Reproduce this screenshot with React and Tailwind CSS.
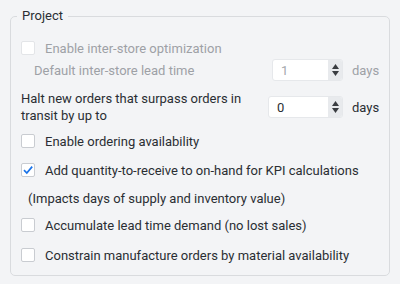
import React from "react";

function Box({ checked, disabled }) {
  return (
    <span
      className={
        "flex h-[14px] w-[14px] shrink-0 items-center justify-center rounded-[2px] border bg-white " +
        (disabled ? "border-[#e3e5e8]" : "border-[#c9ccd1]")
      }
    >
      {checked && (
        <svg width="12" height="12" viewBox="0 0 12 12">
          <path d="M2 6.2 L4.8 9 L10.2 2.6" fill="none" stroke="#1a73e8" strokeWidth="1.7" />
        </svg>
      )}
    </span>
  );
}

function CheckRow({ label, checked, disabled, className }) {
  return (
    <div className={"flex h-[22px] items-center " + className}>
      <Box checked={checked} disabled={disabled} />
      <span className={"ml-[10px] whitespace-nowrap " + (disabled ? "text-[#9ea1a6]" : "text-[#2a2e33]")}>
        {label}
      </span>
    </div>
  );
}

function Spin({ value, disabled, widthClass }) {
  return (
    <div className={"flex h-[22px] overflow-hidden rounded-[3px] border border-[#e6e8eb] bg-white " + widthClass}>
      <div className={"flex flex-1 items-center pl-[8px] " + (disabled ? "text-[#a4a8ad]" : "text-[#2a2e33]")}>
        {value}
      </div>
      <div className="flex w-[14px] flex-col items-center justify-center gap-[2px] bg-[#e8eaed]">
        <svg width="7" height="5" viewBox="0 0 7 5">
          <path d="M3.5 0 L7 5 L0 5 Z" fill="#3a3d41" />
        </svg>
        <svg width="7" height="5" viewBox="0 0 7 5">
          <path d="M0 0 L7 0 L3.5 5 Z" fill="#3a3d41" />
        </svg>
      </div>
    </div>
  );
}

export default function App() {
  return (
    <div
      className="h-[284px] w-[400px] bg-[#f3f4f6] pl-[10px] pt-[7px] text-[13px] leading-[17px]"
      style={{ fontFamily: "Roboto, 'Liberation Sans', sans-serif" }}
    >
      <fieldset className="h-[269px] w-[380px] rounded-[5px] border border-[#d9dbde] px-[10px] pb-[8px]">
        <legend className="ml-[-4px] px-[5px] text-[13px] leading-[18px] text-[#2a2e33]">Project</legend>
        <div className="flex flex-col">
          <CheckRow className="mt-[12px]" label="Enable inter-store optimization" disabled />
          <div className="flex h-[22px] items-center">
            <span className="w-[251px] pl-[13px] text-[#9ea1a6]">Default inter-store lead time</span>
            <Spin value="1" disabled widthClass="w-[71px]" />
            <span className="ml-[9px] text-[#9ea1a6]">days</span>
          </div>
          <div className="mt-[9px] flex h-[34px] items-center">
            <span className="w-[247px] text-[#2a2e33]">Halt new orders that surpass orders in transit by up to</span>
            <Spin value="0" widthClass="w-[75px]" />
            <span className="ml-[9px] text-[#2a2e33]">days</span>
          </div>
          <CheckRow className="mt-[6px]" label="Enable ordering availability" />
          <CheckRow className="mt-[7px]" label="Add quantity-to-receive to on-hand for KPI calculations" checked />
          <div className="mt-[6px] flex h-[22px] items-center pl-[7px] text-[#2a2e33]">
            (Impacts days of supply and inventory value)
          </div>
          <CheckRow className="mt-[5px]" label="Accumulate lead time demand (no lost sales)" />
          <CheckRow className="mt-[8px]" label="Constrain manufacture orders by material availability" />
        </div>
      </fieldset>
    </div>
  );
}
